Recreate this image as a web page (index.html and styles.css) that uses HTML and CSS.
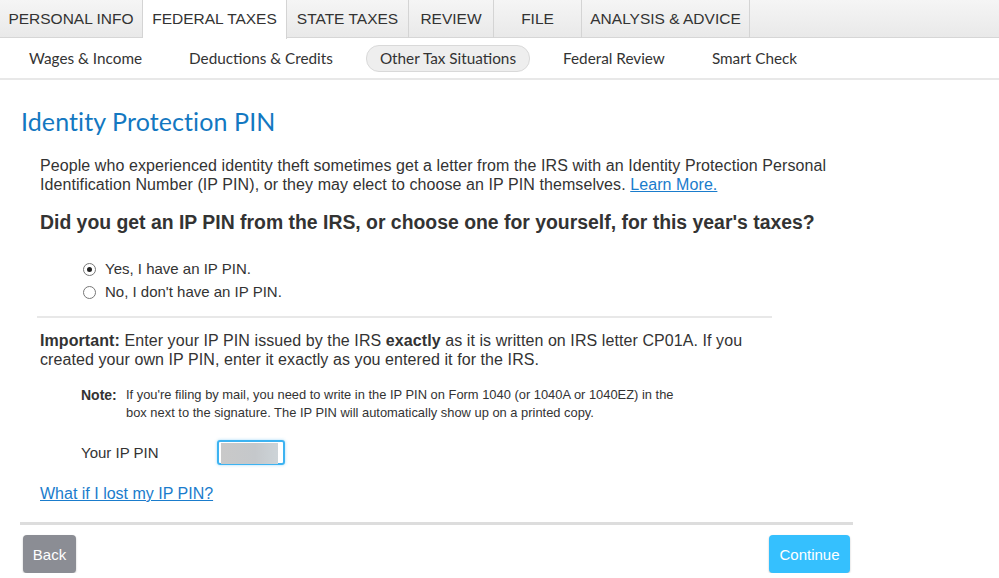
FILE: index.html
```html
<!DOCTYPE html>
<html>
<head>
<meta charset="utf-8">
<link rel="stylesheet" href="styles.css">
</head>
<body>
<nav class="tabs">
  <div class="tab t1">PERSONAL INFO</div>
  <div class="tab t2 active">FEDERAL TAXES</div>
  <div class="tab t3">STATE TAXES</div>
  <div class="tab t4">REVIEW</div>
  <div class="tab t5">FILE</div>
  <div class="tab t6">ANALYSIS &amp; ADVICE</div>
</nav>
<nav class="subnav">
  <div class="sub">Wages &amp; Income</div>
  <div class="sub">Deductions &amp; Credits</div>
  <div class="sub pill">Other Tax Situations</div>
  <div class="sub">Federal Review</div>
  <div class="sub">Smart Check</div>
</nav>
<main class="page">
  <h1 class="title">Identity Protection PIN</h1>
  <div class="body">
    <p class="intro">People who experienced identity theft sometimes get a letter from the IRS with an Identity Protection Personal Identification Number (IP PIN), or they may elect to choose an IP PIN themselves. <a class="link" href="#">Learn More.</a></p>
    <h2 class="question">Did you get an IP PIN from the IRS, or choose one for yourself, for this year's taxes?</h2>
    <div class="radios">
      <label class="radio"><span class="dot on"></span>Yes, I have an IP PIN.</label>
      <label class="radio"><span class="dot"></span>No, I don't have an IP PIN.</label>
    </div>
    <div class="divider"></div>
    <p class="important"><b>Important:</b> Enter your IP PIN issued by the IRS <b>exactly</b> as it is written on IRS letter CP01A. If you created your own IP PIN, enter it exactly as you entered it for the IRS.</p>
    <div class="note">
      <span class="note-label">Note:</span>
      <span class="note-text">If you're filing by mail, you need to write in the IP PIN on Form 1040 (or 1040A or 1040EZ) in the box next to the signature. The IP PIN will automatically show up on a printed copy.</span>
    </div>
    <div class="pinrow">
      <span class="pinlabel">Your IP PIN</span>
      <span class="pinbox"><span class="blur"></span></span>
    </div>
    <a class="link lost" href="#">What if I lost my IP PIN?</a>
  </div>
  <div class="footer">
    <button class="btn back">Back</button>
    <button class="btn cont">Continue</button>
  </div>
</main>
</body>
</html>
```
FILE: styles.css
```css
* { box-sizing: border-box; }
body {
  margin: 0;
  background: #fff;
  font-family: "Liberation Sans", Arial, sans-serif;
  color: #333;
}
.tabs {
  display: flex;
  height: 38px;
  background: linear-gradient(#f5f5f5, #e9e9e9);
  border-bottom: 1px solid #d6d6d6;
}
.tab {
  display: flex;
  align-items: center;
  justify-content: center;
  height: 38px;
  font-size: 15.5px;
  color: #333;
  border-right: 1px solid #d4d4d4;
  padding-bottom: 1px;
}
.tab.active { background: #fff; height: 39px; }
.t1 { width: 143px; }
.t2 { width: 144px; }
.t3 { width: 122px; }
.t4 { width: 85px; }
.t5 { width: 88px; }
.t6 { width: 168px; }
.subnav {
  display: flex;
  align-items: center;
  gap: 19px;
  height: 42px;
  padding-left: 15px;
  border-bottom: 2px solid #e8e8e8;
  font-family: Lato, "Open Sans", sans-serif;
  font-size: 15.3px;
  color: #333;
}
.sub {
  padding: 3px 13px 4px;
  border: 1px solid transparent;
  border-radius: 13px;
}
.pill {
  background: #eeeeee;
  border-color: #d9d9d9;
}
.page { padding: 0 146px 0 20px; }
.title {
  margin: 26px 0 0 1px;
  font-family: Lato, sans-serif;
  font-weight: 400;
  font-size: 25px;
  color: #1378c1;
  letter-spacing: 0.1px;
}
.body { padding-left: 20px; }
.intro {
  margin: 20px 0 0;
  font-size: 16px;
  line-height: 19px;
  letter-spacing: 0.08px;
  max-width: 800px;
}
.link { color: #1a7ccc; }
.question {
  margin: 16px 0 0;
  font-size: 19.4px;
  line-height: 24px;
  font-weight: 700;
  color: #333;
}
.radios {
  display: flex;
  flex-direction: column;
  gap: 5px;
  margin: 26px 0 0 43px;
}
.radio {
  display: flex;
  align-items: center;
  font-size: 15px;
  line-height: 18px;
  color: #333;
}
.dot {
  width: 13px;
  height: 13px;
  border: 1px solid #777;
  border-radius: 50%;
  margin-right: 9px;
  display: flex;
  align-items: center;
  justify-content: center;
}
.dot.on::after {
  content: "";
  width: 5px;
  height: 5px;
  border-radius: 50%;
  background: #222;
}
.divider {
  margin: 15px 0 0 -3px;
  width: 735px;
  height: 2px;
  background: #e8e8e8;
}
.important {
  margin: 13px 0 0;
  font-size: 16px;
  line-height: 19px;
  letter-spacing: 0.08px;
  max-width: 720px;
}
.note {
  display: flex;
  margin: 17px 0 0 41px;
  max-width: 600px;
}
.note-label {
  font-weight: 700;
  font-size: 14px;
  line-height: 18px;
  width: 45px;
  flex: none;
}
.note-text {
  font-size: 12.9px;
  line-height: 18px;
}
.pinrow {
  display: flex;
  align-items: center;
  margin: 18px 0 0 41px;
}
.pinlabel {
  font-size: 15px;
  width: 136px;
}
.pinbox {
  width: 68px;
  height: 25px;
  border: 2px solid #3db3f1;
  border-radius: 3px;
  padding: 2px;
  box-shadow: 0 0 3px rgba(61,179,241,0.5);
}
.blur {
  display: block;
  width: 57px;
  height: 21px;
  margin-top: -1px;
  background: linear-gradient(90deg, #c9c9c9, #c5c8cb 60%, #cdd4d8);
  filter: blur(0.6px);
}
.lost {
  display: inline-block;
  margin-top: 20px;
  font-size: 16px;
}
.footer {
  display: flex;
  justify-content: space-between;
  align-items: flex-start;
  border-top: 3px solid #dddddd;
  margin-top: 19px;
  padding: 10px 3px 0 3px;
}
.btn {
  border: none;
  border-radius: 4px;
  color: #fff;
  font-family: "Liberation Sans Narrow", "Liberation Sans", sans-serif;
  font-size: 15px;
  height: 38px;
  box-shadow: 0 1px 2px rgba(0,0,0,0.25);
}
.back { background: #8b8d94; width: 53px; }
.cont { background: #35c0fe; width: 81px; font-family: "Liberation Sans", sans-serif; }
```
